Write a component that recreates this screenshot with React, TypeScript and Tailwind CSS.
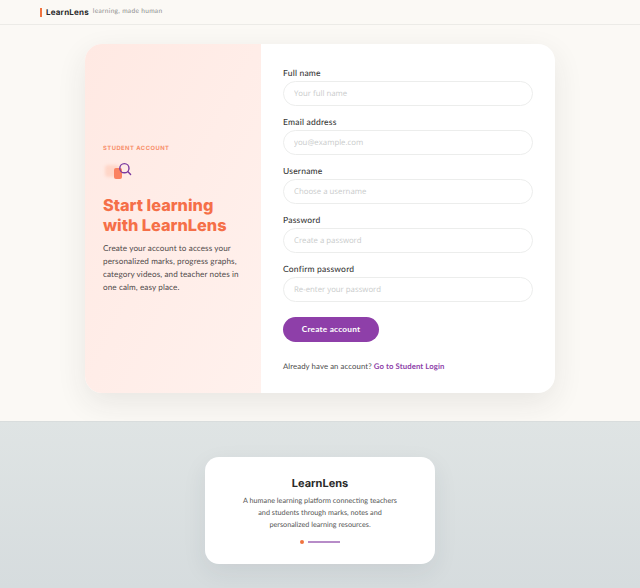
// Student sign up page

const body = '[font-family:Lato,sans-serif] [text-rendering:geometricPrecision]'

function Field({ label, placeholder }: { label: string; placeholder: string }) {
    return (
        <label className="block">
            <span className="block text-[8.5px] leading-[12px] font-medium tracking-[0.2px] text-[#3a3a3a] mb-[2px]">
                {label}
            </span>
            <input
                type="text"
                placeholder={placeholder}
                className="block w-[250px] h-[25px] rounded-full border border-[#ecedec] bg-white px-[10px] text-[7.8px] outline-none placeholder:text-[#c9cbcb] [font-family:'Open_Sans',sans-serif] [text-rendering:geometricPrecision]"
            />
        </label>
    )
}

export default function App() {
    return (
        <div className={`w-[640px] h-[588px] overflow-hidden bg-[#fbf9f5] flex flex-col ${body}`}>
            {/* 헤더 */}
            <header className="h-[25px] shrink-0 border-b border-[#ecebe7] flex items-center pl-[40px]">
                <span className="w-[2px] h-[9px] bg-[#f0733f] mr-[4px]" />
                <span className="text-[8px] font-bold tracking-[0.2px] text-[#2a2a2a] [font-family:Inter,sans-serif]">LearnLens</span>
                <span className="ml-[4px] text-[6.6px] tracking-[0.3px] text-[#8f8f8f]">learning, made human</span>
            </header>

            <main className="h-[396px] shrink-0 pt-[19px] flex justify-center">
                <div className="w-[470px] h-[349px] flex rounded-[17px] overflow-hidden bg-white shadow-[0_10px_30px_rgba(40,40,40,0.09)]">
                    {/* 왼쪽 소개 */}
                    <section className="w-[176px] shrink-0 bg-gradient-to-br from-[#ffe9e3] to-[#fff1ed] pl-[18px] pr-[16px] pt-[2px] flex flex-col justify-center">
                        <p className="text-[5.8px] leading-[8px] font-bold tracking-[0.5px] text-[#f78e6a] [font-family:Inter,sans-serif]">STUDENT ACCOUNT</p>
                        <div className="relative w-[30px] h-[22px] mt-[7px] mb-[13px]">
                            <div className="absolute left-[2px] top-[5px] w-[14px] h-[12px] rounded-[3px] bg-[#ffd6c8] blur-[1.5px]" />
                            <div className="absolute left-[11px] top-[8px] w-[8px] h-[11px] rounded-[2px] bg-[#fb8160]" />
                            <svg className="absolute left-[15px] top-[2px]" width="14" height="14" viewBox="0 0 14 14" fill="none" stroke="#7b3aa0" strokeWidth="1.4">
                                <circle cx="6.4" cy="6.2" r="4.6" />
                                <path d="M10 9.8L12.6 12.6" strokeLinecap="round" />
                            </svg>
                        </div>
                        <h1 className="text-[16.3px] leading-[20px] font-extrabold text-[#f56f48] [font-family:Inter,sans-serif]">
                            Start learning
                            <br />
                            with LearnLens
                        </h1>
                        <p className="mt-[7px] text-[8.15px] leading-[13px] tracking-[0.1px] text-[#4f4a4a]">
                            Create your account to access your personalized marks, progress graphs, category videos, and teacher notes in one calm, easy place.
                        </p>
                    </section>

                    {/* 가입 폼 */}
                    <section className="flex-1 pl-[22px] pt-[23px]">
                        <div className="flex flex-col gap-[10px]">
                            <Field label="Full name" placeholder="Your full name" />
                            <Field label="Email address" placeholder="you@example.com" />
                            <Field label="Username" placeholder="Choose a username" />
                            <Field label="Password" placeholder="Create a password" />
                            <Field label="Confirm password" placeholder="Re-enter your password" />
                        </div>
                        <button className="mt-[15px] block w-[96px] h-[25px] rounded-full bg-[#8e3fa9] text-white text-[8.3px] font-bold tracking-[0.2px]">
                            Create account
                        </button>
                        <p className="mt-[18px] text-[7.75px] leading-[12px] tracking-[0.1px] text-[#4a4a4a]">
                            Already have an account?{" "}
                            <a href="#" className="font-bold text-[#8e3fa9]">Go to Student Login</a>
                        </p>
                    </section>
                </div>
            </main>

            <footer className="flex-1 border-t border-[#d9dddd] bg-gradient-to-b from-[#dfe4e4] to-[#d6dcde] pt-[35px] flex justify-center">
                <div className="w-[230px] h-[107px] rounded-[14px] bg-white shadow-[0_8px_24px_rgba(40,50,60,0.08)] flex flex-col items-center pt-[19px]">
                    <h2 className="text-[11px] leading-[14px] font-bold text-[#2a2a2a] [font-family:Inter,sans-serif]">LearnLens</h2>
                    <p className="mt-[5px] text-[7.25px] leading-[12px] text-center text-[#555]">
                        A humane learning platform connecting teachers
                        <br />
                        and students through marks, notes and
                        <br />
                        personalized learning resources.
                    </p>
                    <div className="mt-[9px] flex items-center gap-[4px]">
                        <span className="w-[4px] h-[4px] rounded-full bg-[#f0733f]" />
                        <span className="w-[32px] h-[2px] bg-[#b78cc8]" />
                    </div>
                </div>
            </footer>
        </div>
    )
}
